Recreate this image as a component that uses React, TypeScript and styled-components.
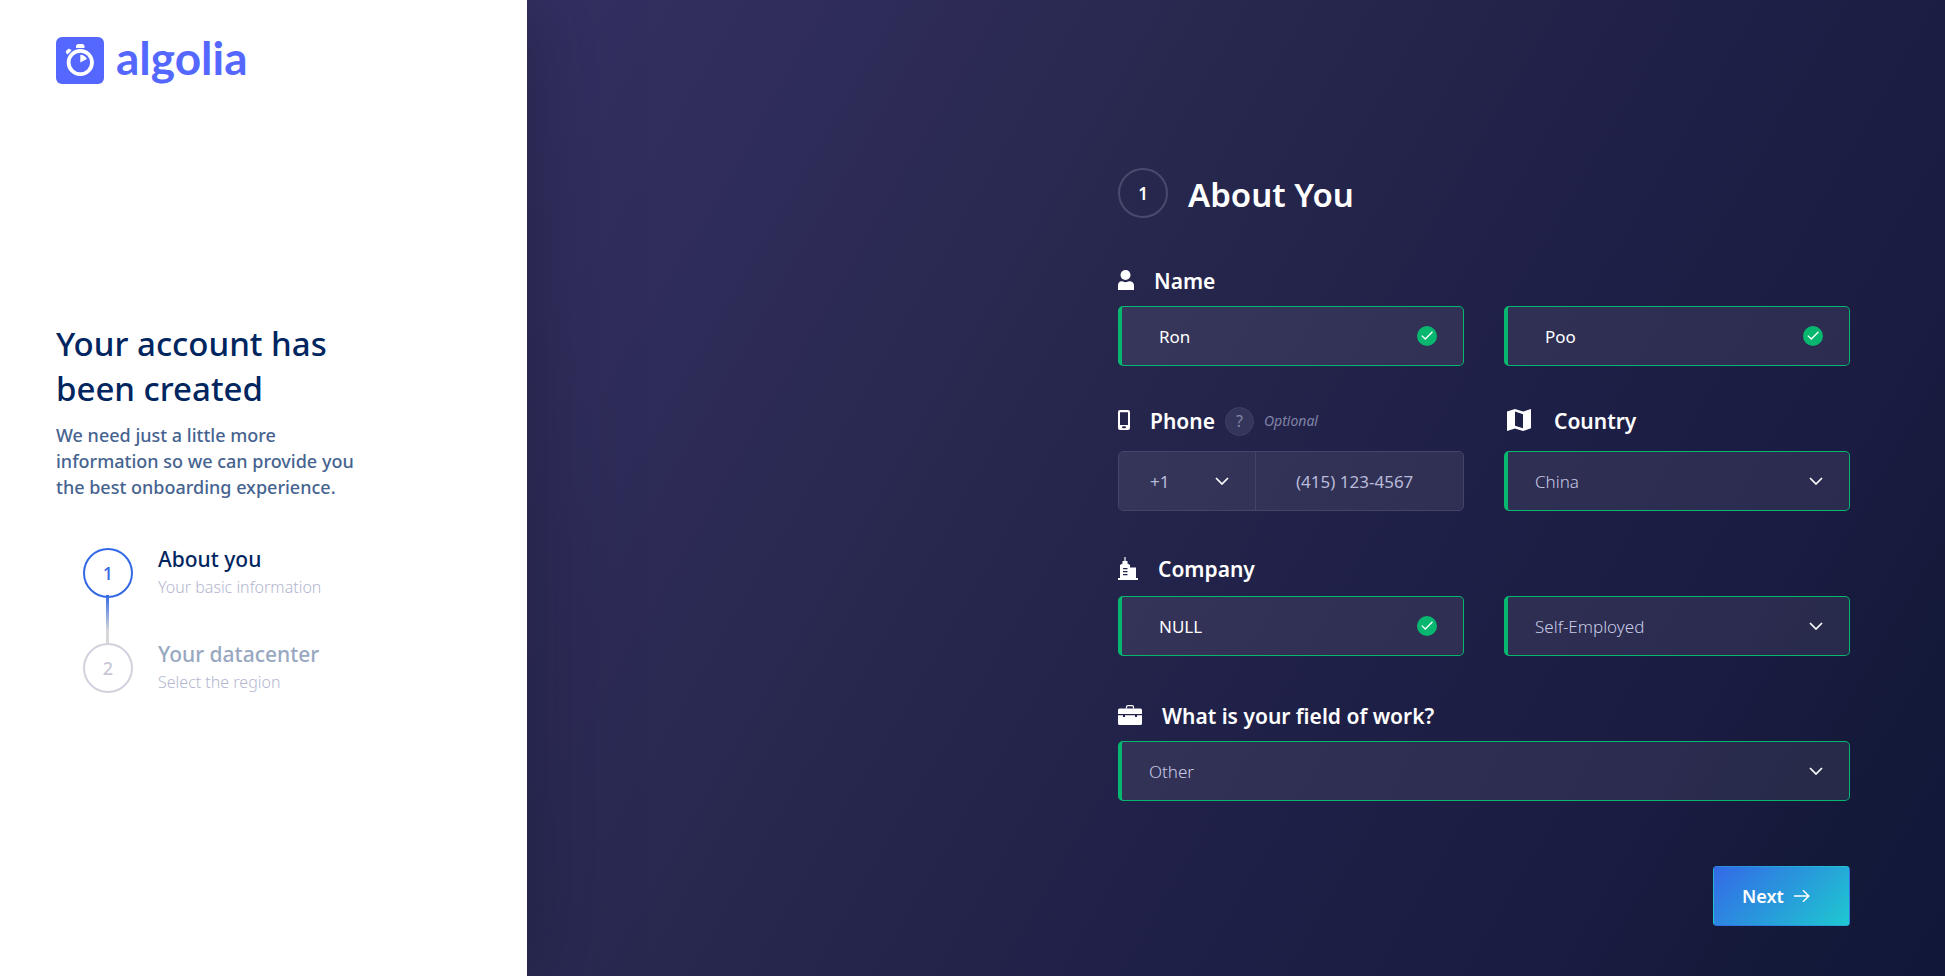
import React, { useState } from 'react';
import styled, { createGlobalStyle, css } from 'styled-components';

const GREEN = '#08b76f';

const GlobalStyle = createGlobalStyle`
  *, *::before, *::after { box-sizing: border-box; }
  body {
    margin: 0;
    font-family: "Noto Sans", "Open Sans", sans-serif;
    font-size: 17px;
  }
  h1, h2, h3, p, ol { margin: 0; padding: 0; }
  button, input, select { font-family: inherit; }
`;

const Page = styled.div`
  display: flex;
  min-height: 100vh;
`;

/* Left panel */

const Sidebar = styled.aside`
  position: relative;
  flex: 0 0 527px;
  display: flex;
  flex-direction: column;
  padding: 37px 56px 46px;
  background: #fff;
  box-shadow: 0 0 80px rgba(20, 22, 50, 0.5);
`;

const Brand = styled.a`
  display: flex;
  align-items: flex-start;
  gap: 12px;
  height: 47px;
  color: #5468ff;
  font: 700 46px/42px Lato, sans-serif;
  text-decoration: none;
`;

const Intro = styled.div`
  flex: 1;
  display: flex;
  flex-direction: column;
  justify-content: center;
`;

const IntroTitle = styled.h1`
  max-width: 310px;
  color: #00255f;
  font-size: 33px;
  font-weight: 500;
  line-height: 45px;
`;

const IntroText = styled.p`
  max-width: 310px;
  margin-top: 11px;
  color: #466390;
  font-size: 18px;
  font-weight: 500;
  line-height: 26px;
`;

const Steps = styled.ol`
  display: flex;
  flex-direction: column;
  gap: 45px;
  margin: 48px 0 0 27px;
  list-style: none;
`;

const Step = styled.li`
  display: flex;
  align-items: center;
  gap: 25px;
  height: 50px;
`;

const StepMarker = styled.span<{ $active?: boolean }>`
  position: relative;
  flex: none;
  display: flex;
  align-items: center;
  justify-content: center;
  width: 50px;
  height: 50px;
  border: 2px solid ${p => (p.$active ? '#3369e7' : '#d2d2de')};
  border-radius: 50%;
  color: ${p => (p.$active ? '#3369e7' : '#c8c8d6')};
  font-size: 18px;
  font-weight: 500;

  ${p => p.$active && css`
    &::after {
      content: '';
      position: absolute;
      top: 45px;
      left: 21px;
      width: 3px;
      height: 48px;
      background: linear-gradient(#3369e7, #d8d8d8 75%);
    }
  `}
`;

const StepTitle = styled.h2<{ $active?: boolean }>`
  color: ${p => (p.$active ? '#00255f' : '#98a8c0')};
  font-size: 21px;
  font-weight: 500;
  line-height: 28px;
`;

const StepNote = styled.p`
  color: #b4b6d0;
  font-size: 16px;
  font-weight: 300;
  line-height: 28px;
`;

/* Right panel */

const Main = styled.main`
  flex: 1;
  padding: 168px 95px 50px;
  background: linear-gradient(
    120deg,
    #343062 0%,
    #28284f 35%,
    #1f2047 60%,
    #1b1c42 78%,
    #151a3b 88%,
    #111738 100%
  );
`;

const Form = styled.form`
  width: 100%;
  max-width: 732px;
  margin-left: auto;
`;

const FormHeader = styled.header`
  display: flex;
  gap: 20px;
  height: 53px;
  color: #fff;
`;

const FormNumber = styled.span`
  display: flex;
  align-items: center;
  justify-content: center;
  width: 50px;
  height: 50px;
  border: 2px solid #4a4a6d;
  border-radius: 50%;
  font-size: 17px;
  font-weight: 600;
`;

const FormTitle = styled.h2`
  font-size: 33px;
  font-weight: 600;
  line-height: 53px;
`;

const Row = styled.div`
  display: grid;
  grid-template-columns: 1fr 1fr;
  column-gap: 40px;
`;

const Cell = styled.div<{ $wide?: boolean }>`
  display: flex;
  flex-direction: column;
  justify-content: flex-end;
  grid-column: ${p => (p.$wide ? '1 / -1' : 'auto')};
`;

const LabelLine = styled.div<{ $gap?: number }>`
  display: flex;
  align-items: flex-end;
  gap: 10px;
  height: 85px;
  padding-bottom: ${p => p.$gap ?? 10}px;
`;

const Label = styled.label`
  display: flex;
  align-items: center;
  gap: 20px;
  height: 30px;
  color: #fff;
  font-size: 21px;
  font-weight: 600;
  line-height: 30px;

  svg { margin-bottom: 2px; }
`;

const HelpButton = styled.button`
  width: 29px;
  height: 29px;
  padding: 0;
  border: 1px solid #3e3f66;
  border-radius: 50%;
  background: #34355a;
  color: #8586a6;
  font-size: 16px;
  line-height: 27px;
`;

const OptionalNote = styled.em`
  color: #8183a6;
  font-size: 14px;
  line-height: 30px;
`;

const Box = styled.div<{ $valid?: boolean }>`
  position: relative;
  display: flex;
  height: 60px;
  border: 1px solid #43446a;
  border-radius: 5px;
  background: rgba(255, 255, 255, 0.075);
  background-clip: padding-box;
  ${p => p.$valid && css`
    border-color: ${GREEN};
    border-left-width: 4px;
  `}
`;

const control = css`
  width: 100%;
  min-width: 0;
  border: 0;
  outline: 0;
  background: transparent;
  font-size: 17px;
`;

const TextInput = styled.input`
  ${control}
  padding: 0 60px 0 37px;
  color: #fff;
`;

const PhoneInput = styled.input`
  ${control}
  padding: 0 20px 0 40px;
  color: #fff;
  &::placeholder { color: #b9bbd9; opacity: 1; }
`;

const SelectInput = styled.select`
  ${control}
  appearance: none;
  padding: 0 50px 0 27px;
  color: #c8cae6;
  font-weight: 300;
  option { color: #222; }
`;

const DialCode = styled.div`
  position: relative;
  flex: 0 0 137px;
  display: flex;
  border-right: 1px solid #43446a;
  select { padding-left: 31px; color: #b9bbd9; font-weight: 400; }
`;

const Trailing = styled.span`
  position: absolute;
  top: 0;
  right: 26px;
  height: 100%;
  display: flex;
  align-items: center;
  pointer-events: none;
`;

const Actions = styled.div`
  display: flex;
  justify-content: flex-end;
  margin-top: 65px;
`;

const NextButton = styled.button`
  display: flex;
  align-items: center;
  gap: 10px;
  width: 137px;
  height: 60px;
  padding: 0 0 0 28px;
  border: 1px solid transparent;
  border-radius: 4px;
  background: linear-gradient(135deg, #3369e7, #1ec8d0);
  color: #fff;
  font-size: 18px;
  font-weight: 600;
`;

/* Icons */

const BrandIcon = () => (
  <svg width="48" height="47" viewBox="0 0 48 47" aria-hidden="true">
    <rect width="48" height="47" rx="6" fill="#5468ff" />
    <path d="M20 11V9.5Q20 7 22.500 7h3.500Q28.500 7 28.500 9.500V11Z" fill="#fff" />
    <path d="M10.500 16.500q-1.500-1.500 0-3l1-1q1.500-1.500 3 0l1 1-4 4Z" fill="#fff" />
    <circle cx="24.300" cy="25.500" r="11.700" fill="none" stroke="#fff" strokeWidth="3.800" />
    <path d="M24.300 17.700v7.800l6.600-3.500a7.700 7.700 0 0 0-6.600-4.300Z" fill="#fff" />
  </svg>
);

const PersonIcon = () => (
  <svg width="16" height="20" viewBox="0 0 16 20" fill="#fff" aria-hidden="true">
    <circle cx="7.500" cy="5" r="5" />
    <path d="M0 20v-4.500Q0 12 3 11.300q1.300-.3 2 .2 2.500 1.300 5 0 .9-.5 2.200-.2Q16 12 16 15.500V20Z" />
  </svg>
);

const PhoneIcon = () => (
  <svg width="12" height="20" viewBox="0 0 12 20" aria-hidden="true">
    <path
      fill="#fff"
      fillRule="evenodd"
      d="M2 0h8q2 0 2 2v16q0 2-2 2H2q-2 0-2-2V2Q0 0 2 0Zm0 2.200V15h8V2.200ZM5 16.200a1 1 0 0 0 0 2h2a1 1 0 0 0 0-2Z"
    />
  </svg>
);

const MapIcon = () => (
  <svg width="30" height="24" viewBox="0 0 30 24" aria-hidden="true">
    <path
      fill="#fff"
      fillRule="evenodd"
      d="M3 3.400 11 1l8 2.600L27 1v19.300L19 23l-8-2.600L3 23Zm8 .2v14.200l8 2.500V6.200Z"
    />
  </svg>
);

const BuildingIcon = () => (
  <svg width="20" height="23" viewBox="0 0 20 23" fill="#fff" aria-hidden="true">
    <path opacity=".75" d="M6.200 0h1.600v4H6.200z" />
    <path
      fillRule="evenodd"
      d="M4.500 4h5v2.500L12 8v2.500h6V21h2v2H0v-2h2V8l2.500-1.500ZM5 11v1.200h4.500V11Zm0 3v1.200h4.500V14Zm0 3v1.200h4.500V17Z"
    />
  </svg>
);

const BriefcaseIcon = () => (
  <svg width="24" height="20" viewBox="0 0 24 20" aria-hidden="true">
    <path d="M8.500 3.500V2q0-1.400 1.400-1.400h4.200q1.400 0 1.400 1.400v1.500" fill="none" stroke="#fff" strokeWidth="1.200" />
    <path fill="#fff" d="M1.500 3.500h21Q24 3.500 24 5v4H0V5q0-1.500 1.500-1.500ZM0 10.200h5V12h2v-1.800h10V12h2v-1.800h5v8.300q0 1.500-1.500 1.500h-21Q0 20 0 18.500Z" />
  </svg>
);

const CheckIcon = () => (
  <svg width="20" height="20" viewBox="0 0 20 20" aria-hidden="true">
    <circle cx="10" cy="10" r="10" fill={GREEN} />
    <path d="m4.800 9.600 3.500 3.400 7.200-7.200" fill="none" stroke="#fff" strokeWidth="1.300" />
  </svg>
);

const ChevronIcon = () => (
  <svg width="14" height="8" viewBox="0 0 14 8" aria-hidden="true">
    <path d="m1 1 6 6 6-6" fill="none" stroke="#fff" strokeWidth="1.700" />
  </svg>
);

const ArrowIcon = () => (
  <svg width="16" height="14" viewBox="0 0 16 14" aria-hidden="true">
    <path d="M0 7h14.500M9 1.200 14.800 7 9 12.800" fill="none" stroke="#fff" strokeWidth="1.500" />
  </svg>
);

/* Fields */

const ValidatedInput = ({ initial, ...rest }: { initial: string; id?: string; 'aria-label'?: string }) => {
  const [value, setValue] = useState(initial);
  return (
    <Box $valid={value !== ''}>
      <TextInput type="text" value={value} onChange={e => setValue(e.target.value)} {...rest} />
      <Trailing>{value !== '' && <CheckIcon />}</Trailing>
    </Box>
  );
};

const ValidatedSelect = ({ options, ...rest }: { options: string[]; id?: string; 'aria-label'?: string }) => (
  <Box $valid>
    <SelectInput {...rest}>
      {options.map(o => <option key={o}>{o}</option>)}
    </SelectInput>
    <Trailing><ChevronIcon /></Trailing>
  </Box>
);

export default function App() {
  return (
    <>
      <GlobalStyle />
      <Page>
        <Sidebar>
          <Brand href="#"><BrandIcon />algolia</Brand>
          <Intro>
            <IntroTitle>Your account has been created</IntroTitle>
            <IntroText>
              We need just a little more information so we can provide you the best onboarding experience.
            </IntroText>
            <Steps>
              <Step>
                <StepMarker $active>1</StepMarker>
                <div>
                  <StepTitle $active>About you</StepTitle>
                  <StepNote>Your basic information</StepNote>
                </div>
              </Step>
              <Step>
                <StepMarker>2</StepMarker>
                <div>
                  <StepTitle>Your datacenter</StepTitle>
                  <StepNote>Select the region</StepNote>
                </div>
              </Step>
            </Steps>
          </Intro>
        </Sidebar>

        <Main>
          <Form onSubmit={e => e.preventDefault()}>
            <FormHeader>
              <FormNumber>1</FormNumber>
              <FormTitle>About You</FormTitle>
            </FormHeader>

            <Row>
              <Cell>
                <LabelLine><Label htmlFor="first-name"><PersonIcon />Name</Label></LabelLine>
                <ValidatedInput id="first-name" initial="Ron" />
              </Cell>
              <Cell><ValidatedInput aria-label="Last name" initial="Poo" /></Cell>
            </Row>

            <Row>
              <Cell>
                <LabelLine $gap={15}>
                  <Label htmlFor="phone"><PhoneIcon />Phone</Label>
                  <HelpButton type="button">?</HelpButton>
                  <OptionalNote>Optional</OptionalNote>
                </LabelLine>
                <Box>
                  <DialCode>
                    <SelectInput aria-label="Dial code"><option>+1</option></SelectInput>
                    <Trailing><ChevronIcon /></Trailing>
                  </DialCode>
                  <PhoneInput id="phone" type="tel" placeholder="(415) 123-4567" />
                </Box>
              </Cell>
              <Cell>
                <LabelLine $gap={15}><Label htmlFor="country"><MapIcon />Country</Label></LabelLine>
                <ValidatedSelect id="country" options={['China']} />
              </Cell>
            </Row>

            <Row>
              <Cell>
                <LabelLine $gap={12}><Label htmlFor="company"><BuildingIcon />Company</Label></LabelLine>
                <ValidatedInput id="company" initial="NULL" />
              </Cell>
              <Cell><ValidatedSelect aria-label="Company size" options={['Self-Employed']} /></Cell>
            </Row>

            <Row>
              <Cell $wide>
                <LabelLine><Label htmlFor="field-of-work"><BriefcaseIcon />What is your field of work?</Label></LabelLine>
                <ValidatedSelect id="field-of-work" options={['Other']} />
              </Cell>
            </Row>

            <Actions>
              <NextButton type="submit">Next<ArrowIcon /></NextButton>
            </Actions>
          </Form>
        </Main>
      </Page>
    </>
  );
}
